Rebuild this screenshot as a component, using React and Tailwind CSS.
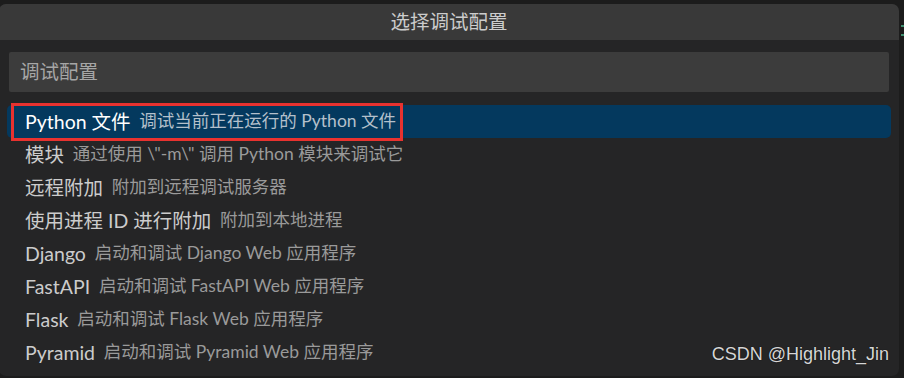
import React from 'react';

const items = [
  { label: 'Python 文件', desc: '调试当前正在运行的 Python 文件', active: true },
  { label: '模块', desc: '通过使用 \\"-m\\" 调用 Python 模块来调试它' },
  { label: '远程附加', desc: '附加到远程调试服务器' },
  { label: '使用进程 ID 进行附加', desc: '附加到本地进程' },
  { label: 'Django', desc: '启动和调试 Django Web 应用程序' },
  { label: 'FastAPI', desc: '启动和调试 FastAPI Web 应用程序' },
  { label: 'Flask', desc: '启动和调试 Flask Web 应用程序' },
  { label: 'Pyramid', desc: '启动和调试 Pyramid Web 应用程序' },
];

export default function App() {
  return (
    <div
      className="relative w-[904px] h-[378px] overflow-hidden bg-[#1c1c1c] pt-[4px]"
      style={{ fontFamily: 'Lato, "Noto Sans CJK SC", sans-serif' }}
    >
      <div className="-ml-px flex h-[372px] w-[900px] flex-col overflow-hidden rounded-[7px] bg-[#252526]">
        <div className="flex h-[36px] items-center justify-center bg-[#393939] text-[19.5px] text-[#cccccc]">
          选择调试配置
        </div>

        <div className="mx-[10px] mt-[12px] flex h-[40px] items-center rounded-[2px] bg-[#3c3c3c] px-[11px] text-[19.5px] text-[#a6a6a6]">
          调试配置
        </div>

        <div className="mt-[13px] flex flex-col px-[8px]">
          {items.map((item, i) => (
            <div
              key={i}
              className={
                item.active
                  ? 'relative flex h-[33px] items-center rounded-[5px] bg-[#04395e] pl-[18px]'
                  : 'relative flex h-[33px] items-center pl-[18px]'
              }
            >
              <span className={item.active ? 'text-[19.5px] text-white' : 'text-[19.5px] text-[#cccccc]'}>
                {item.label}
              </span>
              <span
                className={
                  item.active
                    ? 'ml-[0.5em] text-[17.5px] text-[#b4c0cb]'
                    : 'ml-[0.5em] text-[17.5px] text-[#9a9a9a]'
                }
              >
                {item.desc}
              </span>
              {item.active && (
                <div className="absolute left-[4px] -top-[2px] h-[38px] w-[392px] border-[3px] border-[#e8322f]" />
              )}
            </div>
          ))}
        </div>
      </div>

      <div className="absolute top-[25px] right-0 h-[2px] w-[3px] bg-[#3f8f6f]" />
      <div className="absolute top-[34px] right-0 h-[2px] w-[3px] bg-[#3f8f6f]" />

      <div
        className="absolute right-[15px] bottom-[10px] text-[18px] text-[#d6d6d6]"
        style={{ fontFamily: '"Liberation Sans", sans-serif', textShadow: '0 0 1px #000' }}
      >
        CSDN @Highlight_Jin
      </div>
    </div>
  );
}
